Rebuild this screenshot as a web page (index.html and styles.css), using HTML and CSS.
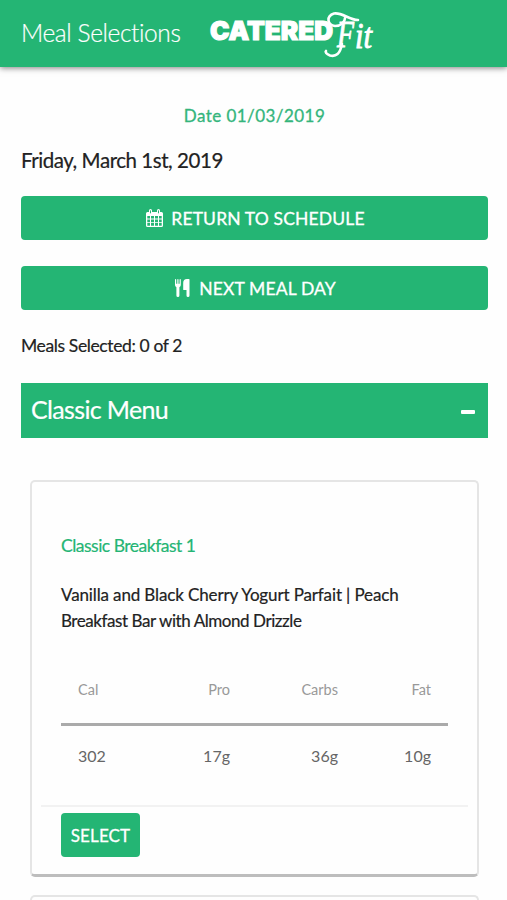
FILE: index.html
```html
<!DOCTYPE html>
<html lang="en">
<head>
    <meta charset="utf-8">
    <title>Meal Selections</title>
    <link rel="stylesheet" href="styles.css">
</head>
<body>
    <header class="top-bar">
        <h1 class="page-title">Meal Selections</h1>
        <svg class="logo" width="170" height="56" viewBox="206 6 170 56">
            <text class="logo-name" x="210" y="40" textLength="123" lengthAdjust="spacingAndGlyphs">CATERED</text>
            <text class="logo-fit" x="337" y="47" font-size="37" textLength="17" lengthAdjust="spacingAndGlyphs">F</text>
            <text class="logo-fit" x="355" y="48" font-size="36" textLength="17" lengthAdjust="spacingAndGlyphs">it</text>
            <!-- flourishes on the F -->
            <path class="swash" d="M358 20C349 20 342 12 334 13.5C326 16 327 25 335 26C341 26 345 22 345 18"/>
            <path class="swash" d="M342 44C340 54 336 57 330 55.5C326 54 325 52 326 51"/>
        </svg>
    </header>

    <main class="content">
        <div class="date-label">Date 01/03/2019</div>
        <h2 class="day-title">Friday, March 1st, 2019</h2>

        <button class="btn btn-block">
            <svg class="icon-calendar" width="17" height="18" viewBox="0 0 17 18">
                <path fill="#fff" fill-rule="evenodd" d="M1.5 3H3V1.5Q3 0 4.5 0T6 1.5V3H11V1.5Q11 0 12.5 0T14 1.5V3H15.5Q17 3 17 4.5V16.5Q17 18 15.5 18H1.5Q0 18 0 16.5V4.5Q0 3 1.5 3ZM1.3 7V9.6H4V7ZM5 7V9.6H8V7ZM9 7V9.6H12V7ZM13 7V9.6H15.7V7ZM1.3 10.5V13.2H4V10.5ZM5 10.5V13.2H8V10.5ZM9 10.5V13.2H12V10.5ZM13 10.5V13.2H15.7V10.5ZM1.3 14.1V16.7H4V14.1ZM5 14.1V16.7H8V14.1ZM9 14.1V16.7H12V14.1ZM13 14.1V16.7H15.7V14.1Z"/>
                <path stroke="#24b574" stroke-width="1" d="M4.5 1.4V4.3M12.5 1.4V4.3"/>
            </svg>
            <span class="return-text">RETURN TO SCHEDULE</span>
        </button>
        <button class="btn btn-block">
            <svg class="icon-cutlery" width="15" height="18" viewBox="0 0 15 18">
                <path fill="#fff" d="M0 .7Q0 0 .6 0T1.2.7V4.7H2.3V.7Q2.3 0 2.9 0T3.5.7V4.7H4.6V.7Q4.6 0 5.2 0T5.8.7V6Q5.8 7.5 4.4 8.2V16.5Q4.4 18 2.9 18T1.4 16.5V8.2Q0 7.5 0 6ZM14.5.6V16.5Q14.5 18 13 18T11.5 16.5V11H8.8Q8.2 11 8.2 10.4V4Q8.2 0 12 0H13.9Q14.5 0 14.5.6Z"/>
            </svg>
            <span class="next-text">NEXT MEAL DAY</span>
        </button>

        <div class="meal-count">Meals Selected: 0 of 2</div>

        <div class="menu-bar">
            <span class="menu-name">Classic Menu</span>
            <span class="collapse"></span>
        </div>

        <section class="card">
            <div class="card-body">
                <h3 class="meal-type">Classic Breakfast 1</h3>
                <p class="meal-name"><span class="line-one">Vanilla and Black Cherry Yogurt Parfait | Peach</span><br><span class="line-two">Breakfast Bar with Almond Drizzle</span></p>
                <table class="nutrition">
                    <thead>
                        <tr><th>Cal</th><th>Pro</th><th>Carbs</th><th>Fat</th></tr>
                    </thead>
                    <tbody>
                        <tr><td>302</td><td>17g</td><td>36g</td><td>10g</td></tr>
                    </tbody>
                </table>
            </div>
            <div class="card-footer">
                <button class="btn btn-select">SELECT</button>
            </div>
        </section>
        <section class="card card-next"></section>
    </main>
</body>
</html>
```
FILE: styles.css
```css
* {
    box-sizing: border-box;
}

body {
    margin: 0;
    height: 900px;
    overflow: hidden;
    background: #fefefe;
    color: #222;
    font-family: Lato, "Liberation Sans", sans-serif;
}

.top-bar {
    display: flex;
    height: 67px;
    padding-left: 21px;
    background: #24b574;
    box-shadow: 0 1px 6px rgba(0, 0, 0, 0.5);
}

.page-title {
    width: 185px;
    margin: 0;
    font-size: 24.5px;
    font-weight: 300;
    line-height: 65px;
    letter-spacing: -0.4px;
    color: #fff;
    white-space: nowrap;
    -webkit-text-stroke: 0.2px;
}

.logo {
    margin-top: 6px;
}

.logo text {
    fill: #fff;
}

.logo-name {
    font-family: Inter, sans-serif;
    font-size: 25.5px;
    font-weight: 900;
    stroke: #fff;
    stroke-width: 1.1;
}

.logo-fit {
    font-family: "Liberation Serif", serif;
    font-style: italic;
    font-weight: 400;
    stroke: #fff;
    stroke-width: 0.9;
}

.swash {
    fill: none;
    stroke: #fff;
    stroke-width: 2.6;
    stroke-linecap: round;
}

.content {
    padding: 37px 19px 0 21px;
}

.date-label {
    font-size: 17px;
    line-height: 24px;
    letter-spacing: 0.45px;
    text-align: center;
    color: #34b57c;
    -webkit-text-stroke: 0.3px;
}

.day-title {
    margin: 18px 0 22px;
    font-size: 20.5px;
    font-weight: 400;
    line-height: 28px;
    letter-spacing: -0.45px;
    -webkit-text-stroke: 0.2px;
}

.btn {
    display: flex;
    align-items: center;
    justify-content: center;
    height: 44px;
    padding: 0;
    border: none;
    border-radius: 4px;
    background: #24b574;
    color: #fff;
    font-family: inherit;
    font-size: 17.5px;
    letter-spacing: 0.15px;
    -webkit-text-stroke: 0.3px;
}

.btn-block {
    gap: 8px;
    width: 100%;
    margin-bottom: 26px;
    padding-left: 2px;
}

.icon-cutlery {
    margin-right: 1px;
}

.meal-count {
    margin-top: -2px;
    font-size: 17.5px;
    line-height: 24px;
    letter-spacing: -0.38px;
    -webkit-text-stroke: 0.2px;
}

.menu-bar {
    display: flex;
    align-items: center;
    justify-content: space-between;
    height: 55px;
    margin-top: 25px;
    padding: 0 13px 0 10px;
    background: #24b574;
    color: #fff;
}

.menu-name {
    margin-top: -4px;
    font-size: 25px;
    letter-spacing: -0.65px;
    -webkit-text-stroke: 0.2px;
}

.collapse {
    width: 14px;
    height: 4px;
    margin-top: 3px;
    border-radius: 1px;
    background: #fff;
}

.card {
    height: 397px;
    margin: 42px 9px 0;
    padding-top: 52px;
    border: 2px solid #e5e5e5;
    border-bottom: 3px solid #bdbdbd;
    border-radius: 5px;
}

/* only the top edge shows at the bottom of the screen */
.card-next {
    height: 5px;
    margin-top: 18px;
    padding: 0;
    border-bottom: none;
    border-radius: 5px 5px 0 0;
}

.card-body {
    height: 271px;
    padding: 0 29px;
}

.meal-type {
    margin: 0;
    font-size: 17.5px;
    font-weight: 400;
    line-height: 24px;
    letter-spacing: -0.5px;
    color: #24b574;
    -webkit-text-stroke: 0.2px;
}

.meal-name {
    margin: 24px 0 22px;
    font-size: 17px;
    line-height: 26px;
    white-space: nowrap;
    -webkit-text-stroke: 0.2px;
}

.line-one {
    letter-spacing: -0.13px;
}

.line-two {
    letter-spacing: -0.43px;
}

.nutrition {
    width: 387px;
    table-layout: fixed;
    border-collapse: collapse;
    font-size: 15px;
    color: #666;
}

.nutrition th {
    height: 68px;
    padding: 0 17px 0 0;
    border-bottom: 3px solid #aaa;
    font-size: 14.5px;
    font-weight: 400;
    text-align: right;
    color: #999;
}

.nutrition td {
    height: 61px;
    padding: 0 17px 0 0;
    font-size: 16px;
    text-align: right;
}

.nutrition th:first-child,
.nutrition td:first-child {
    width: 78px;
    padding: 0 0 0 17px;
    text-align: left;
}

.nutrition th:nth-child(3) {
    width: 108px;
}

.nutrition th:nth-child(4) {
    width: 93px;
}

.card-footer {
    margin: 0 9px;
    padding: 6px 20px 0;
    border-top: 2px solid #f2f2f2;
}

.btn-select {
    width: 79px;
    font-size: 17px;
}
```
